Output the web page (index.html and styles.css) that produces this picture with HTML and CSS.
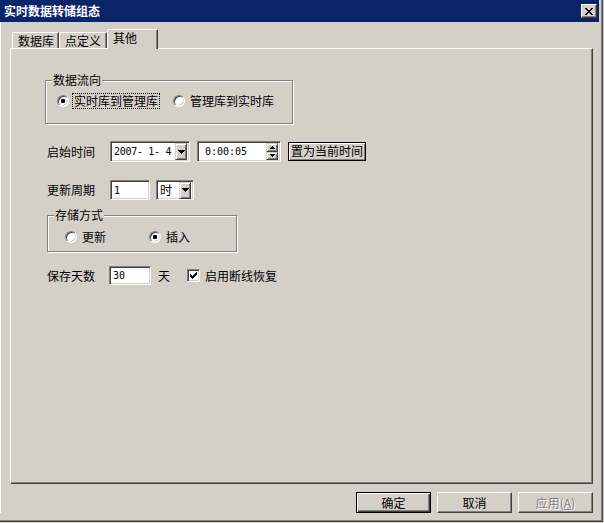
FILE: index.html
```html
<!DOCTYPE html>
<html lang="zh-CN">
<head>
<meta charset="utf-8">
<title>实时数据转储组态</title>
<link rel="stylesheet" href="styles.css">
</head>
<body>
<div class="window">
  <div class="titlebar">
    <span class="title">实时数据转储组态</span>
    <span class="close-btn">
      <svg width="8" height="7" viewBox="0 0 8 7" shape-rendering="crispEdges" fill="#000">
        <rect x="0" y="0" width="2" height="1"/><rect x="6" y="0" width="2" height="1"/>
        <rect x="1" y="1" width="2" height="1"/><rect x="5" y="1" width="2" height="1"/>
        <rect x="2" y="2" width="4" height="1"/>
        <rect x="3" y="3" width="2" height="1"/>
        <rect x="2" y="4" width="4" height="1"/>
        <rect x="1" y="5" width="2" height="1"/><rect x="5" y="5" width="2" height="1"/>
        <rect x="0" y="6" width="2" height="1"/><rect x="6" y="6" width="2" height="1"/>
      </svg>
    </span>
  </div>
  <div class="client">
    <div class="tabs">
      <div class="tab tab-1">数据库</div>
      <div class="tab tab-2">点定义</div>
      <div class="tab tab-3 active">其他</div>
    </div>
    <div class="panel">
      <div class="group group-flow">
        <span class="legend">数据流向</span>
        <div class="radio-row flow-row">
          <span class="radio checked"></span>
          <span class="radio-label focus">实时库到管理库</span>
          <span class="radio second"></span>
          <span class="radio-label">管理库到实时库</span>
        </div>
      </div>

      <div class="row row-start">
        <span class="row-label wide">启始时间</span>
        <div class="field combo date-combo">
          <span class="field-text mono tight">2007- 1- 4</span>
          <span class="drop-btn">
            <svg width="7" height="4" viewBox="0 0 7 4" shape-rendering="crispEdges" fill="#000">
              <rect x="0" y="0" width="7" height="1"/><rect x="1" y="1" width="5" height="1"/>
              <rect x="2" y="2" width="3" height="1"/><rect x="3" y="3" width="1" height="1"/>
            </svg>
          </span>
        </div>
        <div class="field time-field">
          <span class="field-text mono time-text">0:00:05</span>
          <span class="spin">
            <span class="spin-btn">
              <svg width="5" height="3" viewBox="0 0 5 3" shape-rendering="crispEdges" fill="#000">
                <rect x="2" y="0" width="1" height="1"/><rect x="1" y="1" width="3" height="1"/><rect x="0" y="2" width="5" height="1"/>
              </svg>
            </span>
            <span class="spin-btn">
              <svg width="5" height="3" viewBox="0 0 5 3" shape-rendering="crispEdges" fill="#000">
                <rect x="0" y="0" width="5" height="1"/><rect x="1" y="1" width="3" height="1"/><rect x="2" y="2" width="1" height="1"/>
              </svg>
            </span>
          </span>
        </div>
        <span class="btn-now">置为当前时间</span>
      </div>

      <div class="row row-period">
        <span class="row-label wide">更新周期</span>
        <div class="field period-input"><span class="field-text mono">1</span></div>
        <div class="field combo unit-combo">
          <span class="field-text">时</span>
          <span class="drop-btn">
            <svg width="7" height="4" viewBox="0 0 7 4" shape-rendering="crispEdges" fill="#000">
              <rect x="0" y="0" width="7" height="1"/><rect x="1" y="1" width="5" height="1"/>
              <rect x="2" y="2" width="3" height="1"/><rect x="3" y="3" width="1" height="1"/>
            </svg>
          </span>
        </div>
      </div>

      <div class="group group-store">
        <span class="legend">存储方式</span>
        <div class="radio-row store-row">
          <span class="radio"></span>
          <span class="radio-label">更新</span>
          <span class="radio checked third"></span>
          <span class="radio-label">插入</span>
        </div>
      </div>

      <div class="row row-keep">
        <span class="row-label">保存天数</span>
        <div class="field days-input"><span class="field-text mono">30</span></div>
        <span class="unit">天</span>
        <span class="checkbox">
          <svg width="7" height="7" viewBox="0 0 7 7" shape-rendering="crispEdges" fill="#000">
            <rect x="6" y="0" width="1" height="1"/>
            <rect x="5" y="1" width="2" height="1"/>
            <rect x="0" y="2" width="1" height="1"/><rect x="4" y="2" width="3" height="1"/>
            <rect x="0" y="3" width="2" height="1"/><rect x="3" y="3" width="3" height="1"/>
            <rect x="0" y="4" width="5" height="1"/>
            <rect x="1" y="5" width="3" height="1"/>
            <rect x="2" y="6" width="1" height="1"/>
          </svg>
        </span>
        <span class="check-label">启用断线恢复</span>
      </div>
    </div>
    <div class="buttons">
      <span class="button default">确定</span>
      <span class="button">取消</span>
      <span class="button disabled">应用(<u>A</u>)</span>
    </div>
  </div>
</div>
</body>
</html>
```
FILE: styles.css
```css
* { box-sizing: border-box; }
html, body { margin: 0; padding: 0; }
body {
  background: #d4d0c8;
  font-family: "Noto Sans CJK SC", "Liberation Sans", sans-serif;
  font-size: 12px;
  line-height: 14px;
  color: #000;
}
.window {
  width: 603px;
  height: 522px;
  background: #d4d0c8;
  border-right: 1px solid #404040;
  border-bottom: 1px solid #404040;
  box-shadow: inset -1px -1px 0 #808080;
  display: flex;
  flex-direction: column;
}
.titlebar {
  height: 22px;
  margin-right: 3px;
  background: #0a246a;
  display: flex;
  align-items: center;
  justify-content: space-between;
  padding: 0 2px 0 4px;
}
.title {
  color: #fff;
  font-weight: bold;
  line-height: 14px;
}
.close-btn {
  width: 16px;
  height: 14px;
  background: #d4d0c8;
  border: 1px solid;
  border-color: #fff #404040 #404040 #fff;
  box-shadow: inset -1px -1px 0 #808080;
  display: flex;
  align-items: center;
  justify-content: center;
}
.client {
  padding: 7px 0 0 10px;
  box-shadow: inset 1px 0 0 #fff;
}
.tabs {
  display: flex;
  align-items: flex-start;
  height: 19px;
  padding-left: 2px;
}
.tab {
  height: 16px;
  margin-top: 3px;
  padding: 1px 0 0 5px;
  border-top: 1px solid #fff;
  border-left: 1px solid #fff;
  border-right: 1px solid #404040;
  border-top-left-radius: 2px;
  box-shadow: inset -1px 0 0 #808080;
  white-space: nowrap;
}
.tab-1 { width: 47px; }
.tab-2 { width: 48px; }
.tab-3 { width: 51px; }
.tab.active {
  height: 20px;
  margin-top: 0;
  padding-top: 1px;
  background: #d4d0c8;
  position: relative;
  z-index: 1;
}
.panel {
  width: 583px;
  height: 436px;
  border: 1px solid;
  border-color: #fff #404040 #404040 #fff;
  box-shadow: inset -1px -1px 0 #808080;
  padding: 31px 0 0 34px;
  display: flex;
  flex-direction: column;
  align-items: flex-start;
}
.group {
  position: relative;
  border: 1px solid #808080;
  box-shadow: inset 1px 1px 0 #fff, 1px 1px 0 #fff;
}
.legend {
  position: absolute;
  top: -8px;
  left: 6px;
  padding: 0 1px;
  background: #d4d0c8;
  line-height: 14px;
}
.group-flow {
  width: 248px;
  height: 44px;
  padding: 13px 0 0 11px;
}
.group-store {
  width: 190px;
  height: 37px;
  margin: 15px 0 0 2px;
  padding: 14px 0 0 17px;
}
.radio-row {
  display: flex;
  align-items: center;
  height: 14px;
}
.radio {
  width: 12px;
  height: 12px;
  flex: none;
  border-radius: 50%;
  background: #fff;
  border: 1px solid;
  border-color: #808080 #fff #fff #808080;
  box-shadow: inset 1px 1px 0 #404040, inset -1px -1px 0 #d4d0c8;
  display: flex;
  align-items: center;
  justify-content: center;
}
.radio.checked::after {
  content: "";
  width: 4px;
  height: 4px;
  border-radius: 1px;
  background: #000;
}
.flow-row .radio-label { margin-left: 4px; padding: 0 1px; }
.flow-row .radio-label.focus { outline: 1px dotted #000; }
.flow-row .radio.second { margin-left: 14px; }
.store-row .radio-label { margin-left: 5px; }
.store-row .radio.third { margin-left: 43px; }
.row {
  display: flex;
  align-items: center;
  margin-left: 2px;
}
.row-label {
  width: 62px;
  flex: none;
}
.row-label.wide { width: 63px; }
.row-start { margin-top: 17px; }
.row-period { margin-top: 18px; }
.row-keep { margin-top: 14px; }
.field {
  background: #fff;
  border: 1px solid;
  border-color: #808080 #fff #fff #808080;
  box-shadow: inset 1px 1px 0 #404040, inset -1px -1px 0 #d4d0c8;
  padding: 2px;
  display: flex;
  align-items: center;
  justify-content: space-between;
}
.field-text {
  padding-left: 1px;
  white-space: pre;
}
.mono {
  font-family: "DejaVu Sans Mono", "Liberation Mono", monospace;
  font-size: 10px;
  padding-top: 1px;
}
.tight { letter-spacing: -0.3px; }
.date-combo { width: 80px; height: 21px; }
.time-field { width: 84px; height: 21px; margin-left: 7px; }
.time-text { padding-left: 5px; }
.drop-btn {
  width: 12px;
  height: 17px;
  flex: none;
  background: #d4d0c8;
  border: 1px solid;
  border-color: #d4d0c8 #404040 #404040 #d4d0c8;
  box-shadow: inset 1px 1px 0 #fff, inset -1px -1px 0 #808080;
  display: flex;
  align-items: center;
  justify-content: center;
}
.spin {
  display: flex;
  flex-direction: column;
  width: 12px;
  height: 17px;
  flex: none;
}
.spin-btn {
  flex: 1;
  background: #d4d0c8;
  border: 1px solid;
  border-color: #d4d0c8 #404040 #404040 #d4d0c8;
  box-shadow: inset 1px 1px 0 #fff, inset -1px -1px 0 #808080;
  display: flex;
  align-items: center;
  justify-content: center;
}
.btn-now {
  margin-left: 7px;
  height: 19px;
  padding: 1px 2px 0 2px;
  border: 1px solid #000;
  box-shadow: inset 1px 1px 0 #fff, inset -1px -1px 0 #808080;
  white-space: nowrap;
}
.period-input { width: 40px; height: 20px; }
.unit-combo { width: 38px; height: 20px; margin-left: 6px; }
.days-input { width: 42px; height: 19px; }
.unit { margin-left: 7px; }
.checkbox {
  margin-left: 17px;
  width: 13px;
  height: 13px;
  flex: none;
  background: #fff;
  border: 1px solid;
  border-color: #808080 #fff #fff #808080;
  box-shadow: inset 1px 1px 0 #404040, inset -1px -1px 0 #d4d0c8;
  display: flex;
  align-items: center;
  justify-content: center;
}
.check-label { margin-left: 5px; }
.buttons {
  width: 583px;
  margin-top: 8px;
  display: flex;
  justify-content: flex-end;
  gap: 6px;
}
.button {
  width: 75px;
  height: 21px;
  border: 1px solid;
  border-color: #fff #404040 #404040 #fff;
  box-shadow: inset -1px -1px 0 #808080;
  display: flex;
  align-items: center;
  justify-content: center;
}
.button.default {
  border-color: #000;
  box-shadow: inset 1px 1px 0 #fff, inset -1px -1px 0 #404040, inset -2px -2px 0 #808080;
}
.button.disabled {
  color: #808080;
  text-shadow: 1px 1px 0 #fff;
}
```
